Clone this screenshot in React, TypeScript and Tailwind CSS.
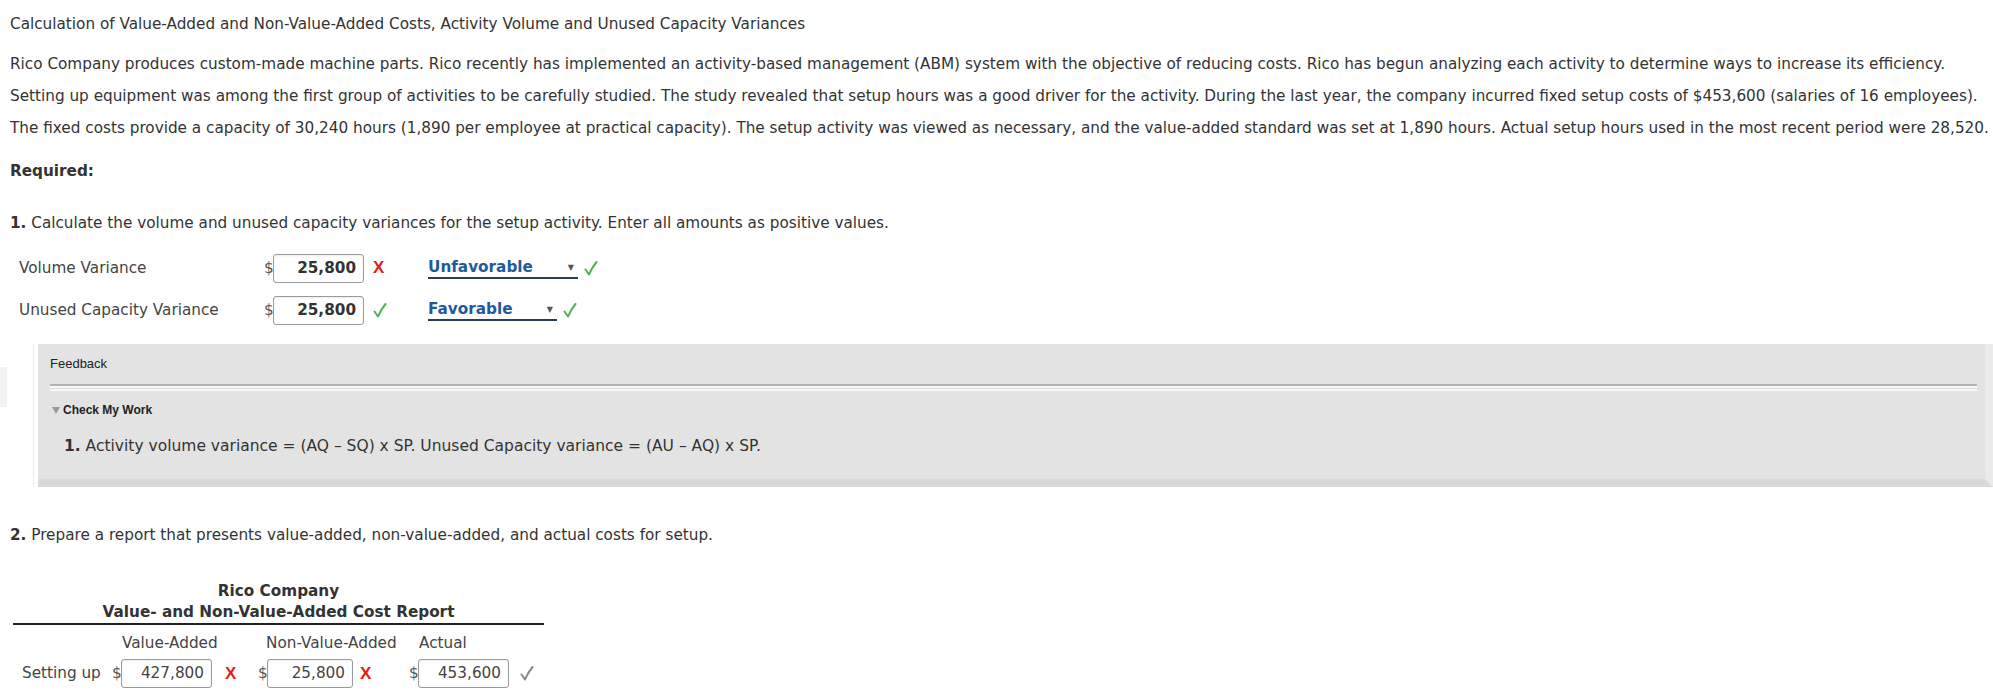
import React from "react";

type Mark = "x" | "ok" | "gray";

function Check({ gray }: { gray?: boolean }) {
  return (
    <svg width="14" height="15" viewBox="0 0 14 15" className="inline-block">
      <path
        d="M1.5 8.5 L5 13.5 Q8 6.5 12.5 1"
        fill="none"
        stroke={gray ? "#8a8a8a" : "#56b05a"}
        strokeWidth="2"
        strokeLinecap="round"
        strokeLinejoin="round"
      />
    </svg>
  );
}

function Cross() {
  return <span className="font-['Liberation_Sans',sans-serif] text-[17px] font-bold text-[#e21c1c]">X</span>;
}

function MarkIcon({ mark }: { mark: Mark }) {
  if (mark === "x") return <Cross />;
  return <Check gray={mark === "gray"} />;
}

function Money({ value, bold, width }: { value: string; bold?: boolean; width: string }) {
  return (
    <div className="flex items-center">
      <span className="w-[9px] text-[#555]">$</span>
      <div
        className={`${width} h-[29px] rounded-[3px] border border-[#9a9a9a] bg-white pr-[7px] text-right leading-[27px] shadow-[inset_0_1px_2px_rgba(0,0,0,0.08)] ${
          bold ? "font-bold text-[#333]" : "text-[#444]"
        }`}
      >
        {value}
      </div>
    </div>
  );
}

function Dropdown({ label, width }: { label: string; width: string }) {
  return (
    <div className={`${width} flex items-center border-b-2 border-[#2c3e57] leading-[19px]`}>
      <span className="flex-1 font-bold text-[#1f5b9c]">{label}</span>
      <span className="mr-[4px] text-[8px] text-[#555]">▼</span>
    </div>
  );
}

const rows = [
  { label: "Volume Variance", value: "25,800", mark: "x" as Mark, choice: "Unfavorable", dd: "w-[150px]" },
  { label: "Unused Capacity Variance", value: "25,800", mark: "ok" as Mark, choice: "Favorable", dd: "w-[129px]" },
];

export default function App() {
  return (
    <div className="min-h-screen bg-white font-['DejaVu_Sans',Verdana,sans-serif] text-[15.25px] text-[#333]">
      <div className="pl-[10px] pt-[14px]">
        <h1 className="text-[15.25px] font-normal leading-[20px]">
          Calculation of Value-Added and Non-Value-Added Costs, Activity Volume and Unused Capacity Variances
        </h1>

        <p className="mt-[14px] whitespace-nowrap leading-[32px]">
          Rico Company produces custom-made machine parts. Rico recently has implemented an activity-based management (ABM) system with the objective of reducing costs. Rico has begun analyzing each activity to determine ways to increase its efficiency.
          <br />
          Setting up equipment was among the first group of activities to be carefully studied. The study revealed that setup hours was a good driver for the activity. During the last year, the company incurred fixed setup costs of $453,600 (salaries of 16 employees).
          <br />
          The fixed costs provide a capacity of 30,240 hours (1,890 per employee at practical capacity). The setup activity was viewed as necessary, and the value-added standard was set at 1,890 hours. Actual setup hours used in the most recent period were 28,520.
        </p>

        <h2 className="mt-[17px] text-[15.25px] font-bold leading-[20px]">Required:</h2>

        <p className="mt-[32px] leading-[20px]">
          <b>1.</b> Calculate the volume and unused capacity variances for the setup activity. Enter all amounts as positive values.
        </p>

        <div className="mt-[20px] flex flex-col gap-[12px]">
          {rows.map((r) => (
            <div key={r.label} className="flex h-[30px] items-center">
              <span className="w-[253px] pl-[9px] text-[#444]">{r.label}</span>
              <div className="ml-[1px]">
                <Money value={r.value} bold width="w-[91px]" />
              </div>
              <span className="w-[64px] pl-[9px]">
                <MarkIcon mark={r.mark} />
              </span>
              <Dropdown label={r.choice} width={r.dd} />
              <span className="ml-[6px]">
                <Check />
              </span>
            </div>
          ))}
        </div>
      </div>

      <div className="mt-[19px] flex">
        <div className="mt-[23px] h-[40px] w-[7px] bg-[#f2f2f2]" />
        <div className="ml-[26px] flex-1 border-l border-[#eaeaea] pl-[4px]">
          <div className="border-b-[8px] border-r-[8px] border-b-[#d9d9d9] border-r-[#ebebeb] bg-[#e3e3e3] pb-[6px] pl-[12px] pr-[8px] pt-[13px]">
            <div className="font-['Liberation_Sans',sans-serif] text-[13px] leading-[14px] text-[#222]">Feedback</div>
            <div className="mt-[13px]">
              <div className="h-[2px] bg-[#b3b3b3]" />
              <div className="h-[2px] bg-[#f8f8f8]" />
              <div className="h-[1px] bg-[#dadada]" />
              <div className="h-[2px] bg-[#f8f8f8]" />
            </div>
            <div className="mt-[12px] flex items-center font-['Liberation_Sans',sans-serif] text-[12px] font-bold leading-[14px] text-[#222]">
              <svg width="8" height="7" viewBox="0 0 8 7" className="mr-[3px] ml-[2px]">
                <path d="M0 0 H8 L4 7 Z" fill="#9a9a9a" />
              </svg>
              Check My Work
            </div>
            <p className="mt-[19px] pl-[14px] text-[15.5px] leading-[20px] text-[#333]">
              <b>1.</b> Activity volume variance = (AQ – SQ) x SP. Unused Capacity variance = (AU – AQ) x SP.
            </p>
            <div className="h-[17px]" />
          </div>
        </div>
      </div>

      <div className="pl-[10px]">
        <p className="mt-[38px] leading-[20px]">
          <b>2.</b> Prepare a report that presents value-added, non-value-added, and actual costs for setup.
        </p>

        <div className="ml-[3px] mt-[36px] w-[531px] border-b-2 border-[#222] text-center font-bold leading-[21px] text-[#333]">
          <div>Rico Company</div>
          <div>Value- and Non-Value-Added Cost Report</div>
        </div>

        <div className="mt-[8px] flex leading-[20px] text-[#444]">
          <span className="w-[112px]" />
          <span className="w-[144px]">Value-Added</span>
          <span className="w-[153px]">Non-Value-Added</span>
          <span>Actual</span>
        </div>

        <div className="mt-[6px] flex h-[29px] items-center text-[#444]">
          <span className="w-[102px] pl-[12px]">Setting up</span>
          <Money value="427,800" width="w-[91px]" />
          <span className="w-[46px] pl-[13px]">
            <Cross />
          </span>
          <Money value="25,800" width="w-[86px]" />
          <span className="w-[56px] pl-[7px]">
            <Cross />
          </span>
          <Money value="453,600" width="w-[91px]" />
          <span className="ml-[11px]">
            <Check gray />
          </span>
        </div>
      </div>
    </div>
  );
}
